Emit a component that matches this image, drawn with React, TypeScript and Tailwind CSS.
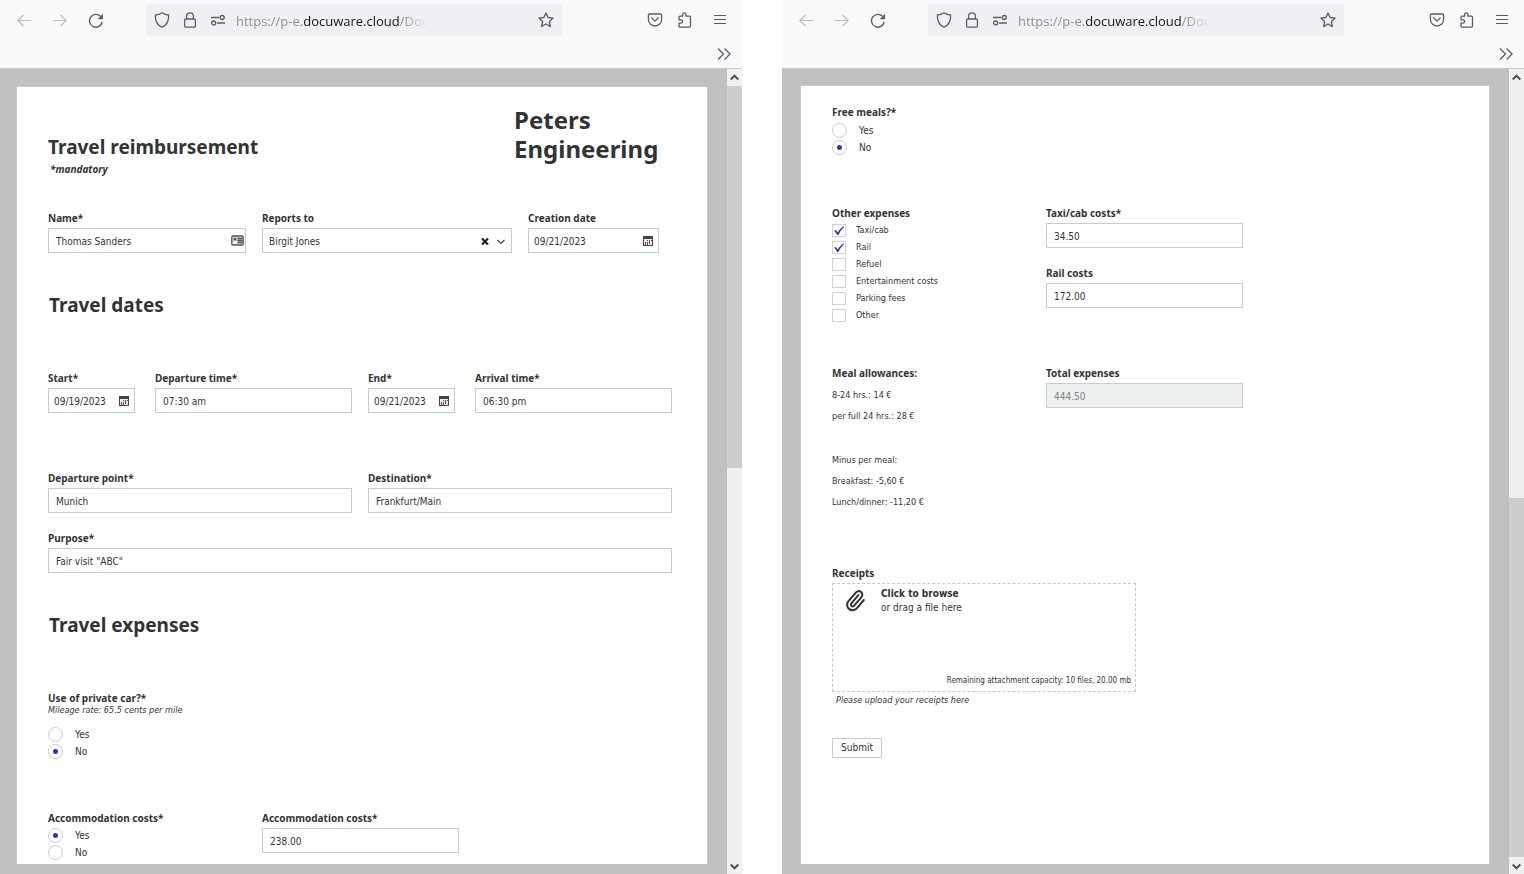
import { useId, useState } from "react";
import type { ReactNode } from "react";

export default function App() {
  return (
    <div className="min-h-screen flex gap-10 bg-white text-[#333333] font-['DejaVu_Sans_Condensed',sans-serif]">
      <BrowserWindow thumb="top">
        <TravelForm />
      </BrowserWindow>
      <BrowserWindow thumb="bottom">
        <ExpensesForm />
      </BrowserWindow>
    </div>
  );
}

function BrowserWindow({ thumb, children }: { thumb: "top" | "bottom"; children: ReactNode }) {
  return (
    <section className="flex-1 min-w-0 flex flex-col">
      <BrowserBar />
      <div className="flex-1 flex bg-[#c0c0c0]">
        <div
          className={
            thumb === "top"
              ? "flex-1 min-w-0 flex flex-col pt-[17px] pb-[10px] pl-4 pr-[19px]"
              : "flex-1 min-w-0 flex flex-col pt-4 pb-[10px] pl-[18px] pr-[19px]"
          }
        >
          <main className="flex-1 bg-white border border-b-0 border-[#c8ccd0]">{children}</main>
        </div>
        <ScrollBar thumb={thumb} />
      </div>
    </section>
  );
}

function BrowserBar() {
  return (
    <header className="bg-[#f9f9fb] border-b border-[#c8c8cc] text-[#5b5b66]">
      <div className="flex items-center pt-1 pl-4 pr-[14px]">
        <button type="button" aria-label="Back" className="text-[#bdbdc1]">
          <svg width="16" height="16" viewBox="0 0 16 16" fill="none" stroke="currentColor" strokeWidth="1.2">
            <path d="M15 8.500H1.500M7.500 3 1.800 8.500l5.700 5.500" />
          </svg>
        </button>
        <button type="button" aria-label="Forward" className="ml-5 text-[#bdbdc1]">
          <svg width="16" height="16" viewBox="0 0 16 16" fill="none" stroke="currentColor" strokeWidth="1.2">
            <path d="M1 8.500h13.500M8.500 3l5.700 5.500-5.700 5.500" />
          </svg>
        </button>
        <button type="button" aria-label="Reload" className="ml-5">
          <svg width="16" height="16" viewBox="0 0 16 16" fill="none" stroke="currentColor" strokeWidth="1.4">
            <path d="M14.200 10A6.400 6.400 0 1 1 12.500 4.300" />
            <path d="M15 1.800v5.400H9.600z" fill="currentColor" stroke="none" />
          </svg>
        </button>
        <div className="ml-[42px] flex-1 min-w-0 h-8 flex items-center rounded bg-[#f0f0f4] pl-2 pr-2">
          <svg width="16" height="16" viewBox="0 0 16 16" fill="none" stroke="currentColor" strokeWidth="1.300">
            <path d="M8 .8c2 1.400 4.200 2.100 6.600 2.200.4 5.800-1.500 10-6.600 12.200C2.900 13 1 8.800 1.400 3 3.800 2.900 6 2.200 8 .8z" strokeLinejoin="round" />
          </svg>
          <svg className="ml-3" width="16" height="16" viewBox="0 0 16 16" fill="none" stroke="currentColor" strokeWidth="1.300">
            <rect x="2.600" y="7" width="10.800" height="8.200" rx="1.200" />
            <path d="M4.600 7V4.200a3.400 3.400 0 0 1 6.800 0V7" />
          </svg>
          <svg className="ml-3" width="16" height="16" viewBox="0 0 16 16" fill="none" stroke="currentColor" strokeWidth="1.300">
            <path d="M1 5.500h8M7 11h8" />
            <circle cx="12.200" cy="5.500" r="2" />
            <circle cx="3.600" cy="11" r="2" />
          </svg>
          <div className="ml-[10px] w-[200px] whitespace-nowrap pt-[2px] text-[13px] leading-5 text-[#8f8f96] font-['Open_Sans',sans-serif] [mask-image:linear-gradient(to_right,black_84%,transparent_96%)]">
            https://p-e.<span className="text-[#15141a]">docuware.cloud</span>/Doc
          </div>
          <button type="button" aria-label="Bookmark this page" className="ml-auto">
            <svg width="16" height="16" viewBox="0 0 16 16" fill="none" stroke="currentColor" strokeWidth="1.300" strokeLinejoin="round">
              <path d="m8 1 2.100 4.500 5 .6-3.700 3.400 1 5L8 12l-4.400 2.500 1-5L.9 6.100l5-.6z" />
            </svg>
          </button>
        </div>
        <div className="ml-[85px] flex items-center">
          <button type="button" aria-label="Save to Pocket">
            <svg width="16" height="16" viewBox="0 0 16 16" fill="none" stroke="currentColor" strokeWidth="1.300" strokeLinecap="round" strokeLinejoin="round">
              <path d="M2.600 2h10.800c.7 0 1.200.5 1.200 1.200v4.200a6.600 6.600 0 0 1-13.200 0V3.200C1.400 2.500 1.900 2 2.600 2z" />
              <path d="m4.800 6 3.200 3.100L11.200 6" />
            </svg>
          </button>
          <button type="button" aria-label="Extensions" className="ml-[14px]">
            <svg width="16" height="16" viewBox="0 0 16 16" fill="none" stroke="currentColor" strokeWidth="1.300" strokeLinejoin="round">
              <path d="M2 5.200c0-.7.4-1 1-1h2.600V2.600a1.700 1.700 0 0 1 3.400 0v1.600h3.400c.7 0 1.100.4 1.100 1.100v8.800c0 .7-.4 1.100-1.100 1.100H3c-.6 0-1-.4-1-1v-3h1.900a1.700 1.700 0 0 0 0-3.400H2z" />
            </svg>
          </button>
          <button type="button" aria-label="Menu" className="ml-[19px]">
            <svg width="16" height="16" viewBox="0 0 16 16" fill="none" stroke="currentColor" strokeWidth="1.200">
              <path d="M2 3.500h12M2 7.500h12M2 11.500h12" />
            </svg>
          </button>
        </div>
      </div>
      <div className="h-8 flex justify-end pt-[10px] pr-[10px]">
        <button type="button" aria-label="More tools" className="h-4">
          <svg width="16" height="16" viewBox="0 0 16 16" fill="none" stroke="currentColor" strokeWidth="1.300">
            <path d="m2 2.500 5.500 5.500L2 13.500M8.500 2.500 14 8l-5.500 5.500" />
          </svg>
        </button>
      </div>
    </header>
  );
}

function ScrollBar({ thumb }: { thumb: "top" | "bottom" }) {
  return (
    <div className="w-[15px] flex flex-col bg-[#f0f0f0] text-[#505050]">
      <div className="h-[17px] flex items-center justify-center">
        <svg width="9" height="8" viewBox="0 0 9 8" fill="none" stroke="currentColor" strokeWidth="2">
          <path d="M.7 5.500l3.800-3.800 3.800 3.800" />
        </svg>
      </div>
      <div className={thumb === "top" ? "flex-1 flex flex-col justify-start" : "flex-1 flex flex-col justify-end"}>
        <div className={thumb === "top" ? "h-[49.5%] bg-[#cdcdcd]" : "h-[46.6%] bg-[#cdcdcd]"} />
      </div>
      <div className="h-[17px] flex items-center justify-center">
        <svg width="9" height="8" viewBox="0 0 9 8" fill="none" stroke="currentColor" strokeWidth="2">
          <path d="M.7 2.500l3.800 3.800 3.800-3.800" />
        </svg>
      </div>
    </div>
  );
}

function TravelForm() {
  return (
    <form className="pl-[31px] pr-[35px] pb-[2px]">
      <div className="flex justify-between pt-[18px] font-['Noto_Sans',sans-serif] font-bold">
        <div className="pt-[30px]">
          <h1 className="text-[19px] leading-6">Travel reimbursement</h1>
          <p className="mt-[2px] pl-[2px] text-[10px] leading-4 italic">*mandatory</p>
        </div>
        <div className="w-[158px] text-[24px] leading-[29px]">Peters Engineering</div>
      </div>

      <div className="mt-[33px] flex gap-4">
        <Field label="Name*" value="Thomas Sanders" className="w-[198px]" icon={<ContactIcon />} />
        <ReportsTo />
        <DateField label="Creation date" value="09/21/2023" className="w-[131px]" />
      </div>

      <SectionTitle>Travel dates</SectionTitle>

      <div className="mt-[53px] flex gap-4">
        <div className="flex-1 flex gap-5">
          <DateField label="Start*" value="09/19/2023" className="w-[87px]" />
          <Field label="Departure time*" value="07:30 am" className="flex-1" />
        </div>
        <div className="flex-1 flex gap-5">
          <DateField label="End*" value="09/21/2023" className="w-[87px]" />
          <Field label="Arrival time*" value="06:30 pm" className="flex-1" />
        </div>
      </div>

      <div className="mt-[57px] flex gap-4">
        <Field label="Departure point*" value="Munich" className="flex-1" />
        <Field label="Destination*" value="Frankfurt/Main" className="flex-1" />
      </div>

      <Field label="Purpose*" value={'Fair visit "ABC"'} className="mt-[17px]" />

      <SectionTitle>Travel expenses</SectionTitle>

      <fieldset className="mt-[55px]">
        <legend className="text-[10px] leading-3 font-bold font-['Noto_Sans',sans-serif]">Use of private car?*</legend>
        <p className="text-[9px] leading-3 italic">Mileage rate: 65.5 cents per mile</p>
        <div className="mt-[11px]">
          <YesNo name="privateCar" defaultValue="No" />
        </div>
      </fieldset>

      <div className="mt-[51px] flex gap-4">
        <fieldset className="w-[198px]">
          <legend className="text-[10px] leading-4 font-bold font-['Noto_Sans',sans-serif]">Accommodation costs*</legend>
          <div className="mt-[2px]">
            <YesNo name="accommodation" defaultValue="Yes" />
          </div>
        </fieldset>
        <Field label="Accommodation costs*" value="238.00" className="w-[197px]" />
      </div>
    </form>
  );
}

const EXPENSES = ["Taxi/cab", "Rail", "Refuel", "Entertainment costs", "Parking fees", "Other"];

function ExpensesForm() {
  const [checked, setChecked] = useState<string[]>(["Taxi/cab", "Rail"]);

  const toggle = (item: string) => {
    setChecked((prev) => (prev.includes(item) ? prev.filter((i) => i !== item) : [...prev, item]));
  };

  return (
    <form className="pl-[31px] pr-[35px] pt-[18px]">
      <fieldset>
        <legend className="text-[10px] leading-4 font-bold font-['Noto_Sans',sans-serif]">Free meals?*</legend>
        <div className="mt-[3px]">
          <YesNo name="freeMeals" defaultValue="No" />
        </div>
      </fieldset>

      <div className="mt-[50px] flex gap-4">
        <fieldset className="w-[198px]">
          <legend className="text-[10px] leading-4 font-bold font-['Noto_Sans',sans-serif]">Other expenses</legend>
          <div className="mt-[3px] flex flex-col gap-1">
            {EXPENSES.map((item) => (
              <label key={item} className="flex items-center gap-[10px] text-[9px] leading-[13px]">
                <span className="relative w-[14px] h-[13px]">
                  <input
                    type="checkbox"
                    checked={checked.includes(item)}
                    onChange={() => toggle(item)}
                    className="peer block appearance-none w-[14px] h-[13px] border border-[#d3d3d6] bg-white"
                  />
                  <svg
                    className="absolute inset-0 hidden peer-checked:block pointer-events-none text-[#2b34b4]"
                    width="14"
                    height="13"
                    viewBox="0 0 14 13"
                    fill="currentColor"
                  >
                    <path d="M2.200 6.600 3.600 5.900l2.300 2.500C7.300 6 9.200 3.900 11.700 2.300l.5.600C9.600 5 7.900 7.600 6.500 11H5.400z" />
                  </svg>
                </span>
                {item}
              </label>
            ))}
          </div>
        </fieldset>
        <div className="w-[197px] flex flex-col gap-[17px]">
          <Field label="Taxi/cab costs*" value="34.50" />
          <Field label="Rail costs" value="172.00" />
        </div>
      </div>

      <div className="mt-[43px] flex gap-4">
        <div className="w-[198px] text-[9px] leading-[21px]">
          <h3 className="text-[10px] leading-4 font-bold font-['Noto_Sans',sans-serif]">Meal allowances:</h3>
          <p className="mt-1">8-24 hrs.: 14 €</p>
          <p>per full 24 hrs.: 28 €</p>
          <p className="mt-[23px]">Minus per meal:</p>
          <p>Breakfast: -5,60 €</p>
          <p>Lunch/dinner: -11,20 €</p>
        </div>
        <Field label="Total expenses" value="444.50" className="w-[197px]" disabled />
      </div>

      <div className="mt-[52px] w-[304px]">
        <h3 className="text-[10px] leading-4 font-bold font-['Noto_Sans',sans-serif]">Receipts</h3>
        <button
          type="button"
          className="mt-[2px] w-full h-[109px] flex flex-col justify-between border border-dashed border-[#c8c8c8] pl-[11px] pr-1 pt-[3px] pb-1 text-left"
        >
          <span className="flex gap-[15px]">
            <PaperclipIcon />
            <span className="text-[10px] leading-[14px]">
              <span className="block font-bold">Click to browse</span>
              <span className="block">or drag a file here</span>
            </span>
          </span>
          <span className="self-end text-[8px] leading-3">Remaining attachment capacity: 10 files, 20.00 mb</span>
        </button>
        <p className="mt-[2px] pl-1 text-[9px] leading-3 italic">Please upload your receipts here</p>
      </div>

      <button type="button" className="mt-8 h-5 w-[50px] border border-[#c8ccd0] text-[10px] leading-4">
        Submit
      </button>
    </form>
  );
}

function SectionTitle({ children }: { children: ReactNode }) {
  return <h2 className="mt-10 pl-[1px] text-[19px] leading-6 font-bold font-['Noto_Sans',sans-serif]">{children}</h2>;
}

type FieldProps = {
  label: string;
  value: string;
  className?: string;
  icon?: ReactNode;
  disabled?: boolean;
};

function Field({ label, value, className = "", icon, disabled }: FieldProps) {
  const id = useId();
  return (
    <div className={className}>
      <label htmlFor={id} className="block mb-[2px] text-[10px] leading-4 font-bold font-['Noto_Sans',sans-serif]">
        {label}
      </label>
      <div
        className={
          disabled
            ? "h-[25px] flex items-center border border-[#c8ccd0] bg-[#ecf0f1] text-[#808080]"
            : "h-[25px] flex items-center border border-[#c8ccd0] bg-white"
        }
      >
        <input
          id={id}
          type="text"
          defaultValue={value}
          disabled={disabled}
          className="flex-1 min-w-0 pl-[7px] pt-[2px] text-[10px] leading-4 outline-none"
        />
        {icon}
      </div>
    </div>
  );
}

function DateField({ label, value, className }: { label: string; value: string; className: string }) {
  const id = useId();
  return (
    <div className={className}>
      <label htmlFor={id} className="block mb-[2px] text-[10px] leading-4 font-bold font-['Noto_Sans',sans-serif]">
        {label}
      </label>
      <div className="h-[25px] flex items-center border border-[#c8ccd0] bg-white pl-[5px] pr-[5px]">
        <input
          id={id}
          type="text"
          defaultValue={value}
          className="flex-1 min-w-0 pt-[2px] text-[10px] leading-4 outline-none"
        />
        <button type="button" aria-label="Pick a date">
          <CalendarIcon />
        </button>
      </div>
    </div>
  );
}

function ReportsTo() {
  const [manager, setManager] = useState("Birgit Jones");
  return (
    <div className="w-[250px]">
      <label htmlFor="reportsTo" className="block mb-[2px] text-[10px] leading-4 font-bold font-['Noto_Sans',sans-serif]">
        Reports to
      </label>
      <div className="relative">
        <select
          id="reportsTo"
          value={manager}
          onChange={(e) => setManager(e.target.value)}
          className="block w-full h-[25px] appearance-none border border-[#c8ccd0] bg-white pl-[6px] pt-[2px] text-[10px] leading-4 outline-none"
        >
          <option value=""></option>
          <option value="Birgit Jones">Birgit Jones</option>
        </select>
        <div className="absolute right-[6px] top-0 h-full flex items-center gap-[7px] pointer-events-none">
          <button type="button" aria-label="Clear" onClick={() => setManager("")} className="pointer-events-auto">
            <svg width="8" height="8" viewBox="0 0 8 8" fill="none" stroke="#222" strokeWidth="2.200">
              <path d="m1 1.500 6 6M7 1.500l-6 6" />
            </svg>
          </button>
          <svg width="10" height="10" viewBox="0 0 10 10" fill="none" stroke="#333" strokeWidth="1.200">
            <path d="m1.500 3.800 3.500 3.500 3.500-3.500" />
          </svg>
        </div>
      </div>
    </div>
  );
}

function YesNo({ name, defaultValue }: { name: string; defaultValue: "Yes" | "No" }) {
  return (
    <div className="flex flex-col gap-[2px]">
      {["Yes", "No"].map((option) => (
        <label key={option} className="flex items-center gap-3 text-[10px] leading-[15px]">
          <input
            type="radio"
            name={name}
            value={option}
            defaultChecked={option === defaultValue}
            className="appearance-none size-[15px] rounded-full border border-[#c8ccd0] checked:bg-[radial-gradient(circle,#2b34b4_2px,transparent_3px)]"
          />
          {option}
        </label>
      ))}
    </div>
  );
}

function ContactIcon() {
  return (
    <svg className="mr-[1px]" width="13" height="11" viewBox="0 0 13 11" fill="none" stroke="#555" strokeWidth="1.300">
      <rect x=".8" y="1" width="11.400" height="9" rx="1" fill="#d8d8d8" />
      <path d="M6.500 3.500h5M6.500 5.500h5M6.500 7.500h5" />
      <path d="M2 8.500V7L4 6.200 5.800 7v1.500z" fill="#fff" stroke="none" />
      <circle cx="4" cy="4.200" r="1.400" fill="#555" stroke="none" />
    </svg>
  );
}

function CalendarIcon() {
  return (
    <svg width="10" height="10" viewBox="0 0 10 10">
      <path d="M0 0h10v10H0z" fill="#444" />
      <path d="M1 3h8v6H1z" fill="#f0ebe4" />
      <path d="M4 4h1v1H4zM6 4h1v1H6zM8 4h1v1H8zM2 6h1v3H2zM4 6h1v3H4zM6 5h1v3H6z" fill="#6b4a3a" />
    </svg>
  );
}

function PaperclipIcon() {
  return (
    <svg width="22" height="26" viewBox="0 0 24 26" fill="none" stroke="#333" strokeWidth="2.200" strokeLinecap="round" strokeLinejoin="round">
      <path
        transform="rotate(-4 12 13)"
        d="m16 8-8.400 8.600a2 2 0 0 0 2.800 2.800l8.400-8.600a4 4 0 1 0-5.600-5.600l-8.400 8.500a6 6 0 1 0 8.500 8.500l8.300-8.500"
      />
    </svg>
  );
}
